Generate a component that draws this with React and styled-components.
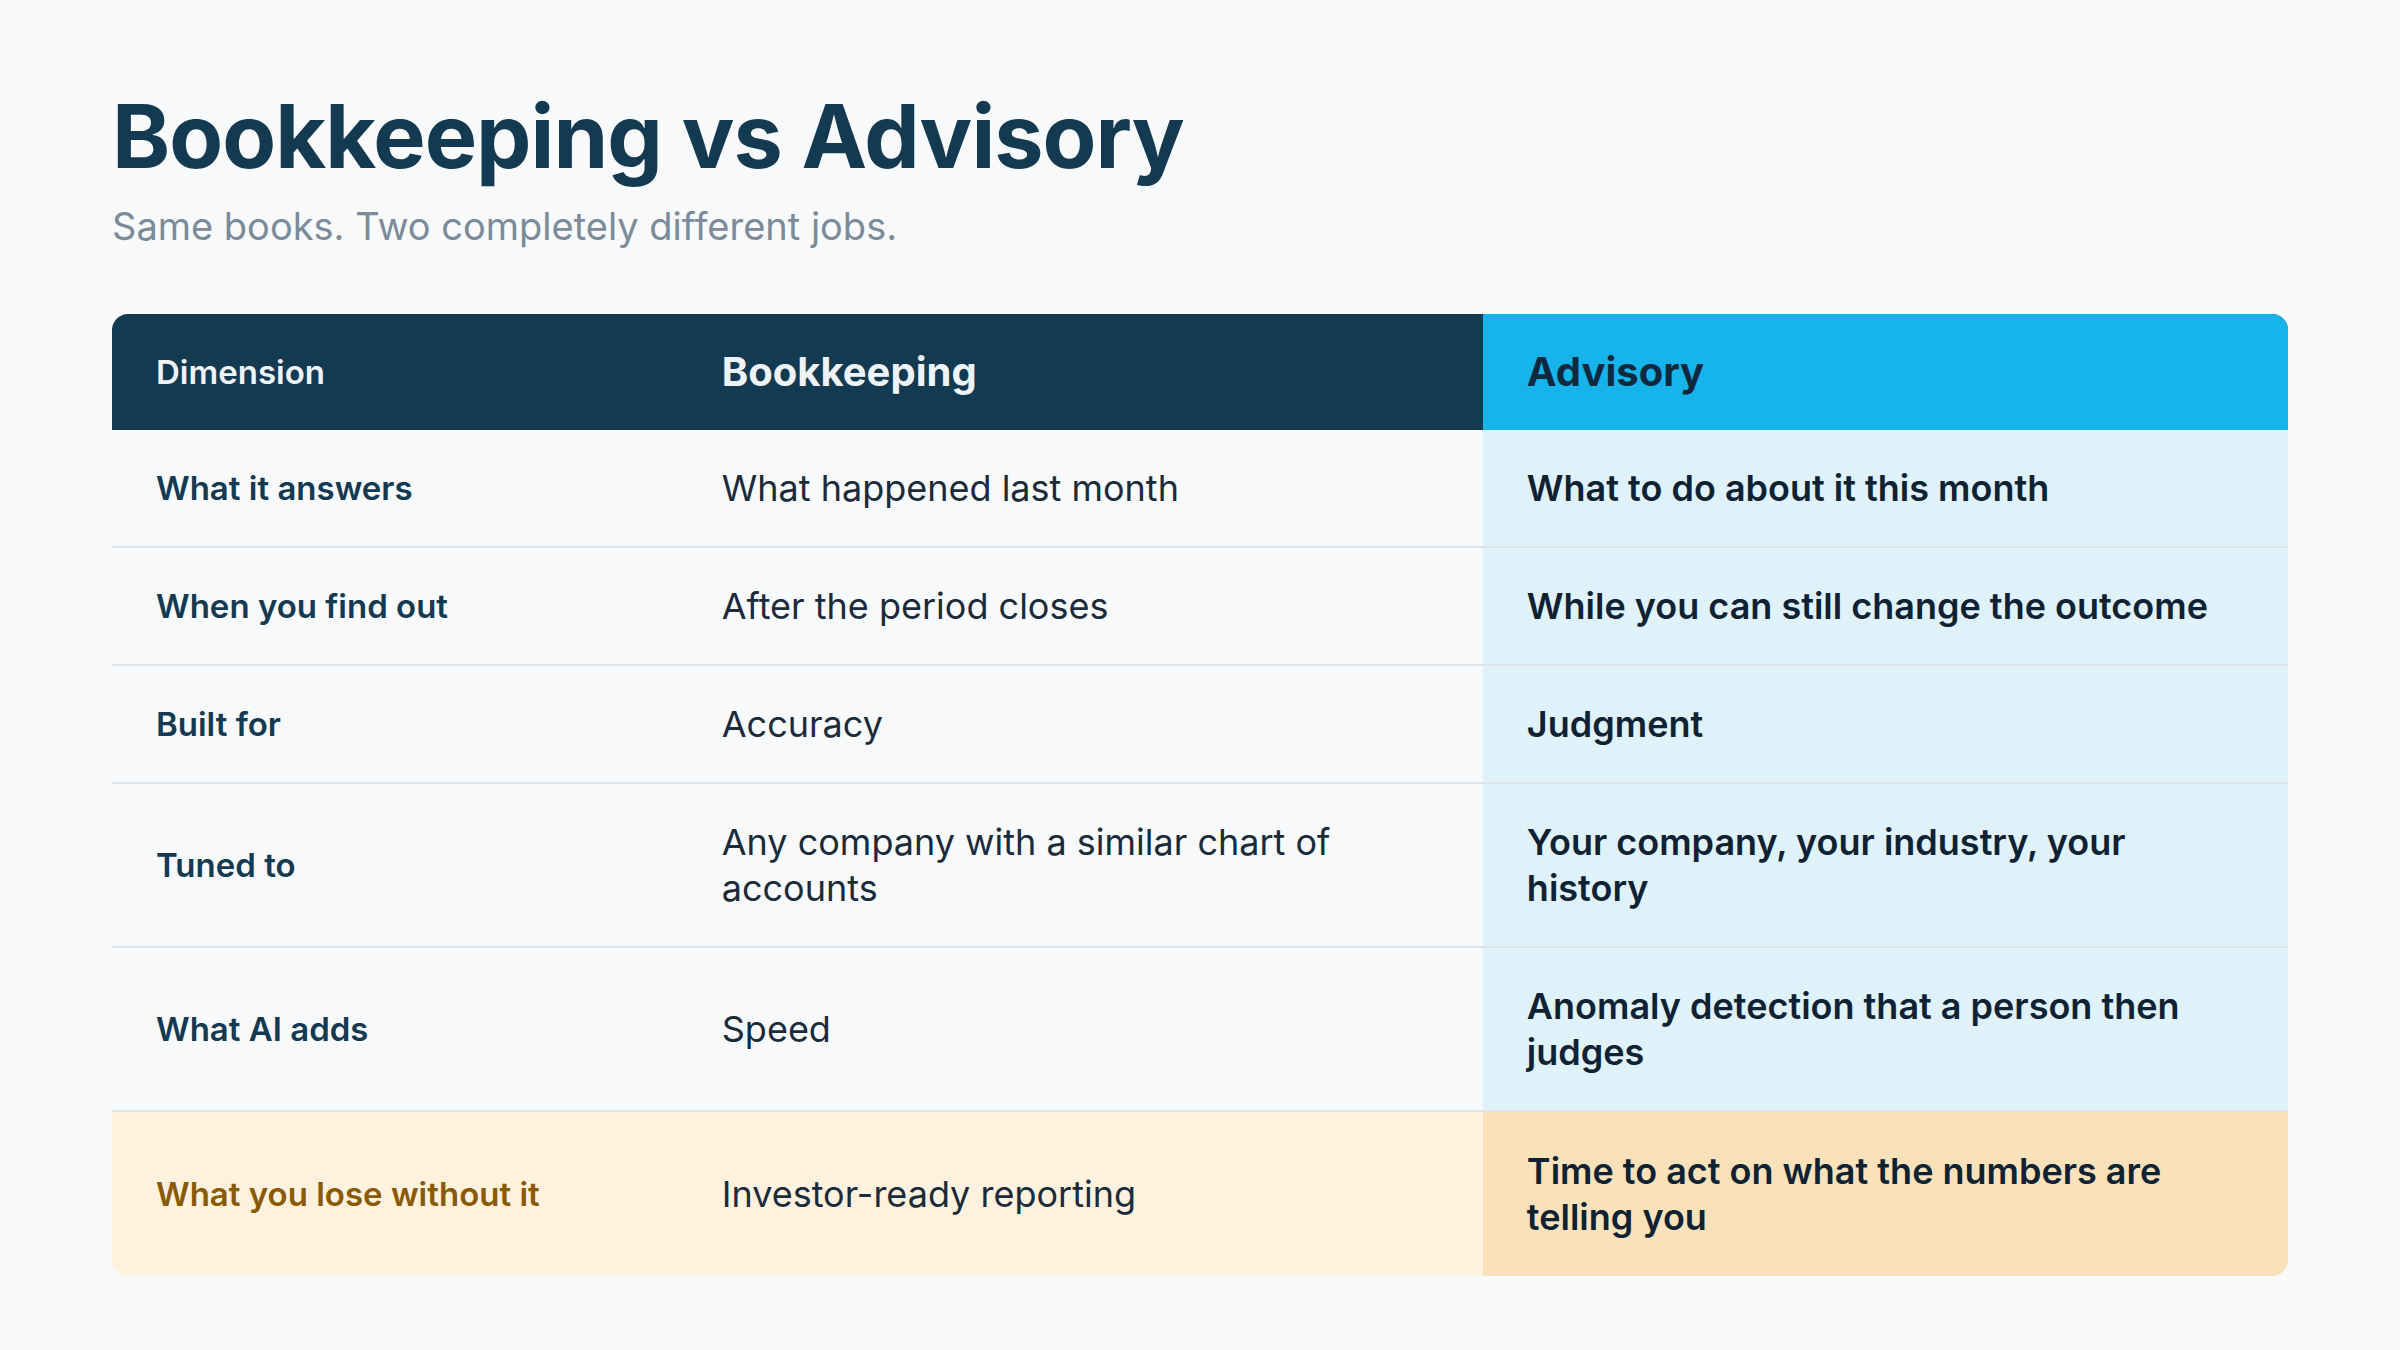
import React from "react";
import styled, { createGlobalStyle, css } from "styled-components";

const Global = createGlobalStyle`
  html, body { margin: 0; padding: 0; background: #f7f9fb; }
  body { font-family: Inter, "Noto Sans", "Liberation Sans", sans-serif; }
  * { box-sizing: border-box; }
`;

const Page = styled.main`
  min-height: 1350px;
  padding: 88px 112px 60px;
  background: #f7f9fb;
  display: flex;
  flex-direction: column;
`;

const Title = styled.h1`
  margin: 0;
  font-size: 88px;
  line-height: 1.1;
  font-weight: 700;
  letter-spacing: -1px;
  color: #143a52;
`;

const Subtitle = styled.p`
  margin: 17px 0 0;
  font-size: 38px;
  line-height: 1.3;
  font-weight: 400;
  color: #7b8b99;
`;

const Table = styled.div`
  margin-top: 63px;
  border-radius: 16px;
  overflow: hidden;
  display: flex;
  flex-direction: column;
`;

const Row = styled.div`
  display: grid;
  grid-template-columns: 26% 37% 37%;
  ${(p) => !p.$last && !p.$head && css`border-bottom: 2px solid #dde4ea;`}
  background: ${(p) => (p.$head ? "#143a52" : p.$last ? "#fef2df" : "#f7f9fb")};
`;

const HeadCell = styled.div`
  display: flex;
  align-items: center;
  padding: 30px 44px;
  line-height: 1.4;
  font-size: ${(p) => (p.$small ? "33px" : "40px")};
  font-weight: ${(p) => (p.$small ? 600 : 700)};
  color: ${(p) => (p.$accent ? "#0f2a3f" : "#eef3f7")};
  background: ${(p) => (p.$accent ? "#16b4ea" : "transparent")};
`;

const Cell = styled.div`
  display: flex;
  align-items: center;
  padding: ${(p) => (p.$last ? "36px" : "35px")} 44px;
  font-size: 36px;
  line-height: 46px;
  ${(p) =>
    p.$kind === "dim" &&
    css`
      font-size: 33px;
      font-weight: 600;
      color: ${p.$last ? "#8a5a00" : "#143a52"};
    `}
  ${(p) =>
    p.$kind === "book" &&
    css`
      font-weight: 400;
      color: #1b2b3a;
    `}
  ${(p) =>
    p.$kind === "adv" &&
    css`
      font-weight: 600;
      color: #0f2233;
      background: ${p.$last ? "#f9e2b9" : "#dff1f9"};
      padding-right: 60px;
    `}
`;

const rows = [
  ["What it answers", "What happened last month", "What to do about it this month"],
  ["When you find out", "After the period closes", "While you can still change the outcome"],
  ["Built for", "Accuracy", "Judgment"],
  ["Tuned to", "Any company with a similar chart of accounts", "Your company, your industry, your history"],
  ["What AI adds", "Speed", "Anomaly detection that a person then judges"],
  ["What you lose without it", "Investor-ready reporting", "Time to act on what the numbers are telling you"],
];

export default function App() {
  return (
    <>
      <Global />
      <Page>
        <Title>Bookkeeping vs Advisory</Title>
        <Subtitle>Same books. Two completely different jobs.</Subtitle>
        <Table>
          <Row $head>
            <HeadCell $small>Dimension</HeadCell>
            <HeadCell>Bookkeeping</HeadCell>
            <HeadCell $accent>Advisory</HeadCell>
          </Row>
          {rows.map((r, i) => {
            const last = i === rows.length - 1;
            return (
              <Row key={r[0]} $last={last}>
                <Cell $kind="dim" $last={last}>{r[0]}</Cell>
                <Cell $kind="book" $last={last}>{r[1]}</Cell>
                <Cell $kind="adv" $last={last}>{r[2]}</Cell>
              </Row>
            );
          })}
        </Table>
      </Page>
    </>
  );
}
